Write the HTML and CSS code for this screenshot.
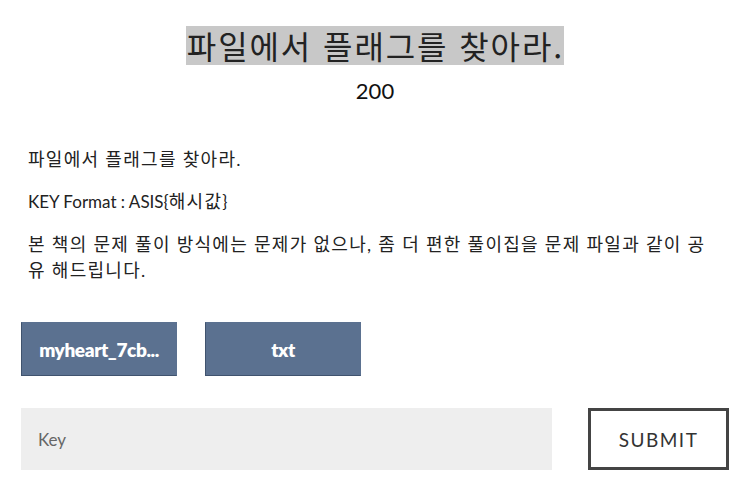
FILE: index.html
```html
<!DOCTYPE html>
<html lang="ko">
<head>
<meta charset="utf-8">
<title>파일에서 플래그를 찾아라.</title>
<link rel="stylesheet" href="styles.css">
</head>
<body>
<div class="challenge">
  <header class="head">
    <h1 class="title"><span class="mark">파일에서 플래그를 찾아라.</span></h1>
    <div class="points">200</div>
  </header>
  <div class="desc">
    <p>파일에서 플래그를 찾아라.</p>
    <p><span class="en">KEY Format : ASIS{</span>해시값<span class="en">}</span></p>
    <p>본 책의 문제 풀이 방식에는 문제가 없으나, 좀 더 편한 풀이집을 문제 파일과 같이 공유 해드립니다.</p>
  </div>
  <div class="files">
    <a class="file" href="#">myheart_7cb...</a>
    <a class="file" href="#">txt</a>
  </div>
  <form class="answer">
    <input class="key" type="text" placeholder="Key">
    <button class="submit" type="button">SUBMIT</button>
  </form>
</div>
</body>
</html>
```

FILE: styles.css
```css
body { margin: 0; background: #fff; color: #222; font-family: Lato, "Noto Sans CJK KR", sans-serif; }
.challenge { padding: 26px 21px 0; }
.head { text-align: center; }
.title { margin: 0; font-size: 32px; font-weight: 400; line-height: 39px; letter-spacing: 1.9px; font-family: "Noto Sans CJK KR", sans-serif; }
.mark { display: inline-block; background: #c8c8c8; color: #222; height: 39px; padding-left: 1px; }
.points { margin-top: 10px; font-size: 22px; line-height: 32px; color: #111; }
.desc { padding: 0 19px 0 7px; margin-top: 39px; font-size: 18px; line-height: 26px; letter-spacing: 1.3px; color: #222; }
.desc p { margin: 0 0 16px; }
.desc .en { font-size: 17px; letter-spacing: 0; }
.files { display: flex; gap: 28px; margin-top: 39px; }
.file { display: flex; align-items: center; justify-content: center; width: 156px; height: 54px; box-sizing: border-box;
  background: #5b7190; border: 1px solid #40536e; border-top-color: #5b7190; border-right-color: #5b7190;
  color: #fff; font-weight: 800; font-size: 19px; letter-spacing: -0.4px; text-decoration: none; }
.answer { display: flex; justify-content: space-between; margin-top: 32px; }
.key { width: 531px; height: 62px; box-sizing: border-box; border: none; background: #eee; padding: 0 17px;
  font-family: Lato, sans-serif; font-size: 17px; color: #222; outline: none; }
.key::placeholder { color: #666; }
.submit { width: 141px; height: 62px; box-sizing: border-box; border: 3px solid #444; background: #fff;
  font-family: Lato, sans-serif; font-size: 19px; letter-spacing: 1.5px; color: #333; }
```
